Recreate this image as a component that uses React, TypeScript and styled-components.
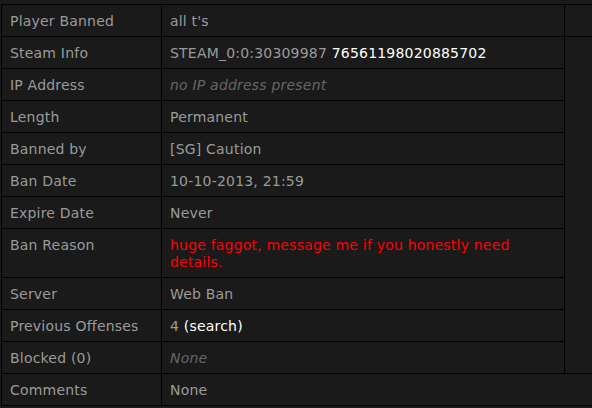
import React from "react";
import styled, { createGlobalStyle } from "styled-components";

const Global = createGlobalStyle`
  html, body { margin: 0; padding: 0; background: #1a1a1a; overflow: hidden; }
  body { font-family: "DejaVu Sans", Verdana, sans-serif; font-size: 14px; letter-spacing: 0.2px; }
`;

const Table = styled.div`
  margin: 4px 0 0 1px;
  width: 591px;
  box-sizing: border-box;
  display: grid;
  grid-template-columns: 159px 402px 1fr;
  gap: 1px;
  padding: 1px 0 1px 1px;
  background: #000;
`;

const Cell = styled.div<{ $span?: number; $rows?: number }>`
  background: #1a1a1a;
  padding: 8px 8px 6px;
  line-height: 17px;
  color: #9a9a9a;
  grid-column: ${(p) => (p.$span ? `span ${p.$span}` : "auto")};
  grid-row: ${(p) => (p.$rows ? `span ${p.$rows}` : "auto")};
`;

const Strong = styled.span`
  color: #ffffff;
`;

const Muted = styled.span`
  color: #666666;
  font-style: italic;
`;

const Reason = styled.span`
  color: #ff0000;
`;

const Link = styled.a`
  color: #ffffff;
  text-decoration: none;
`;

export default function App() {
  return (
    <>
      <Global />
      <Table>
        <Cell>Player Banned</Cell>
        <Cell>all t's</Cell>
        <Cell />
        <Cell>Steam Info</Cell>
        <Cell>
          STEAM_0:0:30309987 <Strong>76561198020885702</Strong>
        </Cell>
        <Cell $rows={10} />
        <Cell>IP Address</Cell>
        <Cell>
          <Muted>no IP address present</Muted>
        </Cell>
        <Cell>Length</Cell>
        <Cell>Permanent</Cell>
        <Cell>Banned by</Cell>
        <Cell>[SG] Caution</Cell>
        <Cell>Ban Date</Cell>
        <Cell>10-10-2013, 21:59</Cell>
        <Cell>Expire Date</Cell>
        <Cell>Never</Cell>
        <Cell>Ban Reason</Cell>
        <Cell>
          <Reason>huge faggot, message me if you honestly need details.</Reason>
        </Cell>
        <Cell>Server</Cell>
        <Cell>Web Ban</Cell>
        <Cell>Previous Offenses</Cell>
        <Cell>
          4 <Link href="#">(search)</Link>
        </Cell>
        <Cell>Blocked (0)</Cell>
        <Cell>
          <Muted>None</Muted>
        </Cell>
        <Cell>Comments</Cell>
        <Cell $span={2}>None</Cell>
      </Table>
    </>
  );
}
